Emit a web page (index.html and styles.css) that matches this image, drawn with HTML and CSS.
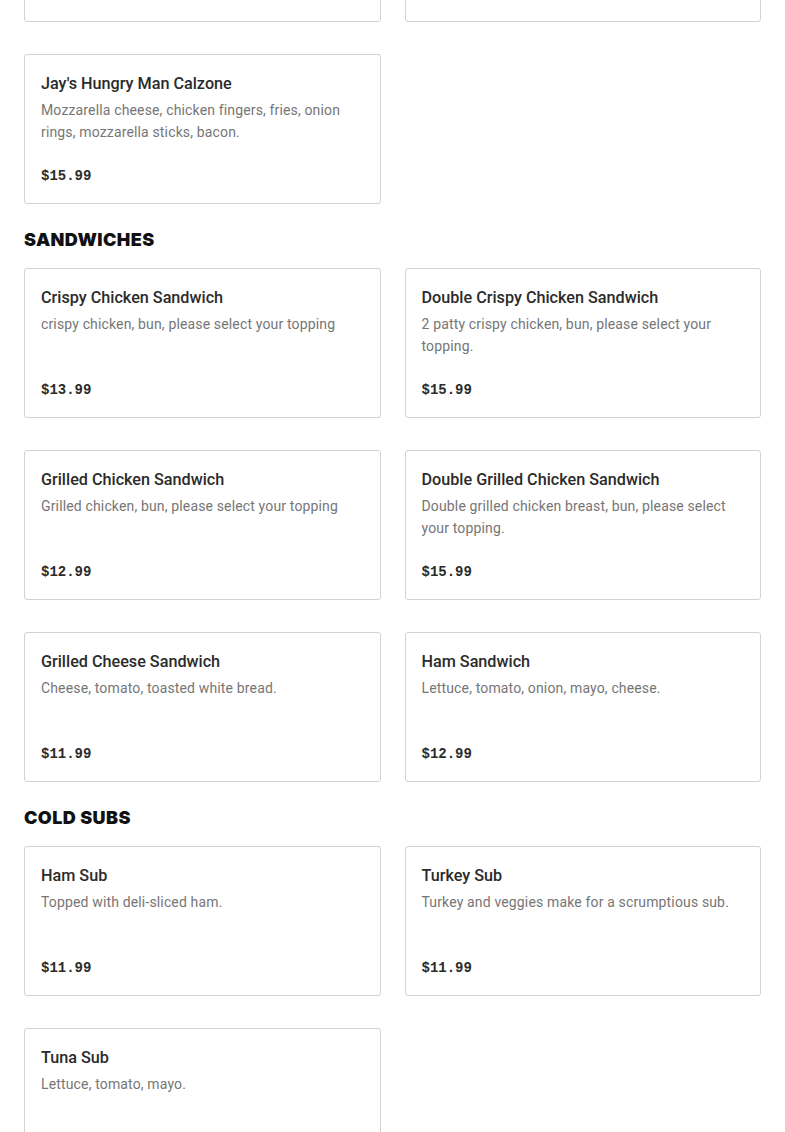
FILE: index.html
```html
<!DOCTYPE html>
<html lang="en">
<head>
<meta charset="utf-8">
<title>Menu</title>
<link rel="stylesheet" href="styles.css">
</head>
<body>
<main class="menu">
  <section class="section section-first">
    <div class="grid">
      <div class="card"><h3 class="card-title">Calzone</h3><p class="card-desc">Mozzarella cheese.</p><div class="card-price">$14.99</div></div>
      <div class="card"><h3 class="card-title">Calzone</h3><p class="card-desc">Mozzarella cheese.</p><div class="card-price">$14.99</div></div>
      <div class="card"><h3 class="card-title">Jay's Hungry Man Calzone</h3><p class="card-desc">Mozzarella cheese, chicken fingers, fries, onion rings, mozzarella sticks, bacon.</p><div class="card-price">$15.99</div></div>
    </div>
  </section>
  <section class="section">
    <h2 class="section-title">SANDWICHES</h2>
    <div class="grid">
      <div class="card"><h3 class="card-title">Crispy Chicken Sandwich</h3><p class="card-desc">crispy chicken, bun, please select your topping</p><div class="card-price">$13.99</div></div>
      <div class="card"><h3 class="card-title">Double Crispy Chicken Sandwich</h3><p class="card-desc">2 patty crispy chicken, bun, please select your topping.</p><div class="card-price">$15.99</div></div>
      <div class="card"><h3 class="card-title">Grilled Chicken Sandwich</h3><p class="card-desc">Grilled chicken, bun, please select your topping</p><div class="card-price">$12.99</div></div>
      <div class="card"><h3 class="card-title">Double Grilled Chicken Sandwich</h3><p class="card-desc">Double grilled chicken breast, bun, please select your topping.</p><div class="card-price">$15.99</div></div>
      <div class="card"><h3 class="card-title">Grilled Cheese Sandwich</h3><p class="card-desc">Cheese, tomato, toasted white bread.</p><div class="card-price">$11.99</div></div>
      <div class="card"><h3 class="card-title">Ham Sandwich</h3><p class="card-desc">Lettuce, tomato, onion, mayo, cheese.</p><div class="card-price">$12.99</div></div>
    </div>
  </section>
  <section class="section">
    <h2 class="section-title">COLD SUBS</h2>
    <div class="grid">
      <div class="card"><h3 class="card-title">Ham Sub</h3><p class="card-desc">Topped with deli-sliced ham.</p><div class="card-price">$11.99</div></div>
      <div class="card"><h3 class="card-title">Turkey Sub</h3><p class="card-desc">Turkey and veggies make for a scrumptious sub.</p><div class="card-price">$11.99</div></div>
      <div class="card"><h3 class="card-title">Tuna Sub</h3><p class="card-desc">Lettuce, tomato, mayo.</p><div class="card-price">$11.99</div></div>
    </div>
  </section>
</main>
</body>
</html>
```

FILE: styles.css
```css
html, body {
  margin: 0;
  padding: 0;
  background: #ffffff;
}
body {
  font-family: Roboto, "Liberation Sans", sans-serif;
  color: #2b2b2b;
}
.menu {
  padding: 0 24px;
  overflow: hidden;
}
.section-first {
  margin-top: -128px;
}
.section-title {
  margin: 24px 0 16px;
  font-family: Inter, "Liberation Sans", sans-serif;
  font-weight: 900;
  font-size: 18px;
  line-height: 24px;
  color: #111111;
  letter-spacing: 0.4px;
}
.grid {
  display: grid;
  grid-template-columns: 1fr 1fr;
  column-gap: 24px;
  row-gap: 32px;
}
.card {
  box-sizing: border-box;
  height: 150px;
  border: 1px solid #d2d2d2;
  border-radius: 3px;
  padding: 16px 16px 15px;
  display: flex;
  flex-direction: column;
  background: #fff;
}
.card-title {
  margin: 0 0 3px;
  padding-top: 1px;
  font-size: 16.2px;
  font-weight: 500;
  line-height: 24px;
  color: #2b2b2b;
}
.card-desc {
  margin: 0;
  font-size: 14px;
  line-height: 22px;
  letter-spacing: 0.15px;
  color: #767676;
}
.card-price {
  margin-top: auto;
  font-family: "Liberation Mono", monospace;
  font-weight: 700;
  font-size: 14px;
  line-height: 24px;
  color: #2b2b2b;
}
```
